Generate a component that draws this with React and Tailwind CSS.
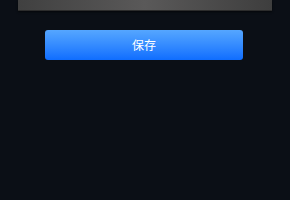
export default function App() {
  return (
    <div className="w-[290px] h-[200px] bg-[#0b0f16] flex flex-col" style={{ fontFamily: '"Noto Sans CJK SC", "Noto Sans", sans-serif' }}>
      <div className="mx-[18px] h-[11px] bg-gradient-to-r from-[#404040] via-[#5a5959] to-[#3e3e3e] border-b border-[#2c2c2c] shadow-[0_1px_2px_rgba(0,0,0,0.6)]" />
      <div className="mt-[19px] px-[45px]">
        <button className="w-[198px] h-[30px] rounded-[3px] bg-gradient-to-b from-[#55a6ff] to-[#0e6dff] text-white text-[12px] leading-none flex items-center justify-center">
          保存
        </button>
      </div>
    </div>
  );
}
